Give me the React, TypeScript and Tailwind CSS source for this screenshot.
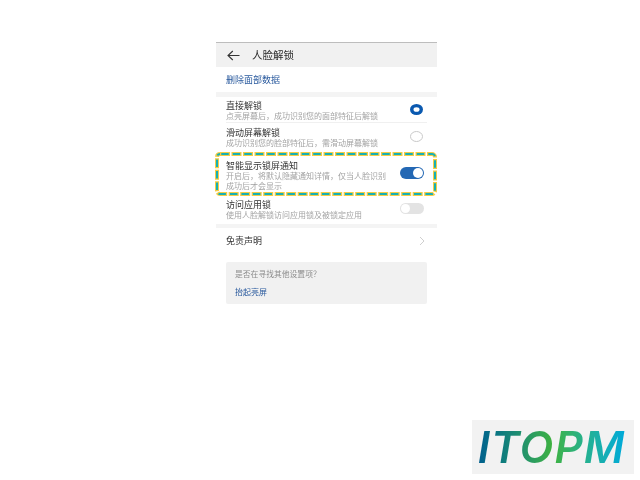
import React from "react";

const font = { fontFamily: '"Noto Sans CJK SC", "Liberation Sans", sans-serif' };

function Text({ title, sub }: { title: string; sub: string }) {
  return (
    <div className="flex-1 min-w-0">
      <div className="text-[9px] leading-[10px] text-[#333]">{title}</div>
      <div className="text-[8px] leading-[10px] text-[#a3a3a3]">{sub}</div>
    </div>
  );
}

function Radio({ on }: { on?: boolean }) {
  return (
    <svg width="13" height="11" viewBox="0 0 13 11" className="block">
      {on ? (
        <>
          <ellipse cx="6.5" cy="5.5" rx="6.5" ry="5.5" fill="#0a59b0" />
          <ellipse cx="6.5" cy="5.5" rx="3" ry="2.3" fill="#fff" />
        </>
      ) : (
        <ellipse cx="6.5" cy="5.5" rx="6" ry="5" fill="#fff" stroke="#c8c8c8" strokeWidth="1" />
      )}
    </svg>
  );
}

export default function App() {
  return (
    <div className="w-[640px] h-[480px] bg-white flex flex-col overflow-hidden" style={font}>
      <div className="w-[221px] ml-[216px] mt-[42px] blur-[0.35px]">
        <div className="h-[25px] bg-[#f1f1f1] border-t border-[#bdbdbd] flex items-center pl-[11px] gap-[12px]">
          <svg width="13" height="11" viewBox="0 0 13 11" fill="none" stroke="#333" strokeWidth="1.1">
            <path d="M12.5 5.5H1M5.8 1 1 5.5 5.8 10" />
          </svg>
          <span className="text-[10.5px] text-[#2b2b2b]">人脸解锁</span>
        </div>
        <div className="h-[25px] flex items-center pl-[10px] text-[9px] text-[#2a5a9e]">删除面部数据</div>
        <div className="h-[5px] bg-[#f4f4f4]" />

        <div className="h-[25px] pt-[4px] flex items-start pl-[10px] pr-[14px]">
          <Text title="直接解锁" sub="点亮屏幕后，成功识别您的面部特征后解锁" />
          <div className="mt-[3px]"><Radio on /></div>
        </div>
        <div className="h-px mx-[10px] bg-[#f0f0f0]" />
        <div className="h-[29px] pt-[5px] flex items-start pl-[10px] pr-[14px]">
          <Text title="滑动屏幕解锁" sub="成功识别您的脸部特征后，需滑动屏幕解锁" />
          <div className="mt-[3px]"><Radio /></div>
        </div>

        <div className="relative h-[44px] pt-[9px] pl-[10px] pr-[13px] flex items-start">
          <div className="flex-1 min-w-0">
            <div className="text-[9px] leading-[10px] text-[#333]">智能显示锁屏通知</div>
            <div className="text-[8px] leading-[9.5px] text-[#a3a3a3] w-[165px]">开启后，将默认隐藏通知详情，仅当人脸识别成功后才会显示</div>
          </div>
          <div className="w-[24px] h-[12px] mt-[6px] rounded-full bg-[#2468b4] flex items-center justify-end pr-[1px]">
            <div className="w-[10px] h-[10px] rounded-full bg-white" />
          </div>
          <svg className="absolute -left-px top-0" width="222" height="44" fill="none">
            <rect x="2" y="2" width="218" height="40" rx="3" stroke="#f4cc45" strokeWidth="4" strokeDasharray="10 1.5" />
            <rect x="2" y="2" width="218" height="40" rx="3" stroke="#16b0b5" strokeWidth="2" strokeDasharray="7.5 4" strokeDashoffset="-1.25" />
          </svg>
        </div>

        <div className="h-[28px] pt-[4px] flex items-start pl-[10px] pr-[13px]">
          <Text title="访问应用锁" sub="使用人脸解锁访问应用锁及被锁定应用" />
          <div className="w-[24px] h-[11px] mt-[3px] rounded-full bg-[#e3e3e3] flex items-center pl-[1px]">
            <div className="w-[9px] h-[9px] rounded-full bg-white" />
          </div>
        </div>

        <div className="h-[4px] bg-[#f4f4f4]" />

        <div className="h-[26px] flex items-center justify-between pl-[10px] pr-[12px]">
          <span className="text-[9px] text-[#333]">免责声明</span>
          <svg width="6" height="10" viewBox="0 0 6 10" fill="none" stroke="#cfcfcf" strokeWidth="1">
            <path d="M1 1l4 4-4 4" />
          </svg>
        </div>

        <div className="mx-[10px] mt-[8px] h-[42px] bg-[#f1f1f1] rounded-[2px] pl-[9px] pt-[6px] flex flex-col gap-[6px]">
          <div className="text-[7.8px] leading-[12px] text-[#8c8c8c]">是否在寻找其他设置项？</div>
          <div className="text-[8px] leading-[12px] text-[#2a5a9e]">抬起亮屏</div>
        </div>
      </div>

      <div className="mt-auto mb-[6px] ml-[472px] w-[162px] h-[54px] bg-[#f2f2f2] flex items-center justify-center blur-[0.5px]">
        <span
          className="text-[44px] leading-none italic font-semibold tracking-[1px] bg-clip-text text-transparent bg-gradient-to-r from-[#035f8e] via-[#3fb23c] to-[#00a9e0] pr-[3px]"
          style={{ fontFamily: 'Inter, "Liberation Sans", sans-serif' }}
        >
          ITOPM
        </span>
      </div>
    </div>
  );
}
